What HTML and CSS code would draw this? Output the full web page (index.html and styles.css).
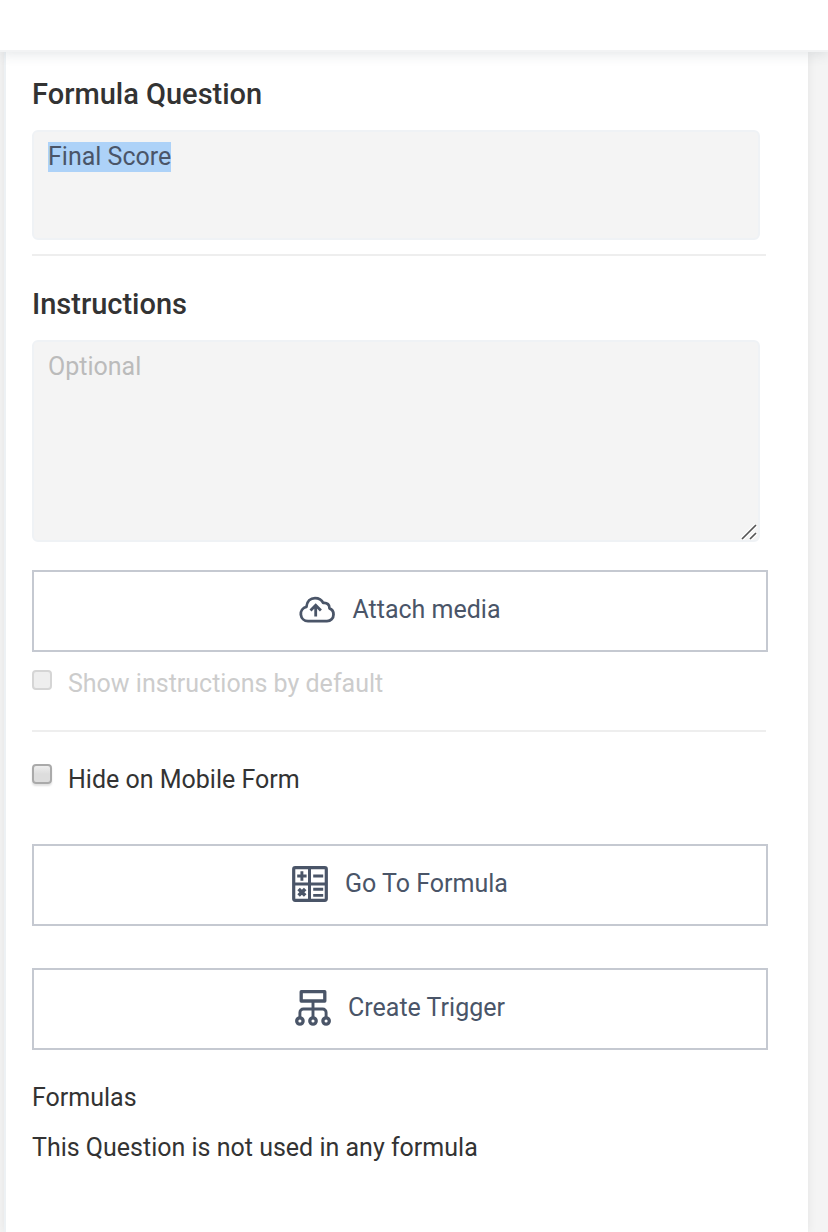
FILE: index.html
```html
<!DOCTYPE html>
<html lang="en">
<head>
<meta charset="utf-8">
<meta name="viewport" content="width=device-width, initial-scale=1">
<title>Formula Question</title>
<link rel="stylesheet" href="styles.css">
</head>
<body>
<header class="topbar"></header>
<main class="panel">
  <section class="section">
    <label class="heading" for="question">Formula Question</label>
    <textarea class="field field-question" id="question" spellcheck="false">Final Score</textarea>
  </section>
  <hr class="divider">
  <section class="section">
    <label class="heading" for="instructions">Instructions</label>
    <div class="resizable">
      <textarea class="field field-instructions" id="instructions" placeholder="Optional"></textarea>
      <svg class="grip" viewBox="0 0 16 16" aria-hidden="true"><path d="M1 15 15 1M9 15l6-6" fill="none" stroke="#fff" stroke-width="4"/><path d="M1 15 15 1M9 15l6-6" fill="none" stroke="#555" stroke-width="1.7"/></svg>
    </div>
    <button class="button button-attach" type="button">
      <svg class="icon" viewBox="0 0 36 36" fill="none" stroke="currentColor" stroke-width="2.8" stroke-linecap="round" stroke-linejoin="round" aria-hidden="true"><path d="M9 29.200a7.300 7.300 0 0 1-1.600-14.400C8 9.200 11.600 6.100 16 6.100c4 0 6.800 1.900 8.200 4.800 4-.5 6.500 2 6.300 5.500 2.500 1 4 3.200 4 6 0 4-2.900 6.800-6.500 6.800Z"/><path d="M16.700 24.500V13.200M11.500 18.500l5.200-5.200 5.200 5.200" stroke-linecap="butt" stroke-linejoin="miter"/></svg>
      <span>Attach media</span>
    </button>
    <label class="check check-disabled"><input class="box" type="checkbox" disabled><span>Show instructions by default</span></label>
  </section>
  <hr class="divider">
  <section class="section">
    <label class="check check-hide"><input class="box" type="checkbox"><span>Hide on Mobile Form</span></label>
    <div class="actions">
      <button class="button" type="button">
        <svg class="icon" viewBox="0 0 36 36" fill="none" stroke="currentColor" stroke-width="3.2" aria-hidden="true"><rect x="1.700" y="1.700" width="32.600" height="32.600" rx="1.500"/><path d="M17.500 2v32M2 18h32" stroke-width="3"/><path d="M5.200 10h9.400M9.900 5.300v9.400M21.200 10h10M21.200 23.200h10M21.200 29.400h10" stroke-width="2.900"/><path d="m6.600 23 6.600 6.600M13.200 23l-6.600 6.600" stroke-width="3.600"/></svg>
        <span>Go To Formula</span>
      </button>
      <button class="button" type="button">
        <svg class="icon" viewBox="0 0 36 36" fill="none" stroke="currentColor" stroke-width="3.300" stroke-linejoin="round" aria-hidden="true"><rect x="6.200" y="1.700" width="23.600" height="9.300"/><path d="M18 11v16M4.900 27.500v-5a3.500 3.500 0 0 1 3.500-3.500h19.200a3.500 3.500 0 0 1 3.500 3.500v5" stroke-width="2.900"/><circle cx="4.900" cy="31" r="3.200"/><circle cx="18" cy="31" r="3.200"/><circle cx="31.100" cy="31" r="3.200"/></svg>
        <span>Create Trigger</span>
      </button>
    </div>
    <h2 class="usage-title">Formulas</h2>
    <p class="usage-text">This Question is not used in any formula</p>
  </section>
</main>
<script src="script.js"></script>
</body>
</html>
```
FILE: styles.css
```css
* {
  box-sizing: border-box;
}

body {
  display: flex;
  flex-direction: column;
  min-height: 100vh;
  margin: 0;
  background: #f4f4f4;
  color: #333;
  font-family: Roboto, "Liberation Sans", sans-serif;
  font-size: 25px;
  line-height: 32px;
}

.topbar {
  position: relative;
  height: 52px;
  background: #fff;
  border-bottom: 2px solid #f2f3f4;
  box-shadow: 0 2px 12px rgba(60, 75, 95, 0.14);
}

.panel {
  flex: 1;
  margin: 0 20px 0 4px;
  padding: 26px 40px 68px 26px;
  background: #fff;
  border-left: 2px solid #edf1f4;
  box-shadow: 0 0 10px rgba(0, 0, 0, 0.07);
}

.section {
  display: flex;
  flex-direction: column;
}

.heading {
  margin-bottom: 20px;
  font-size: 29px;
  font-weight: 500;
  line-height: 32px;
}

.field {
  display: block;
  width: 100%;
  padding: 10px 14px;
  border: 2px solid #eff2f5;
  border-radius: 6px;
  background: #f4f4f4;
  color: #4a5568;
  font: inherit;
  line-height: 30px;
  outline: none;
  resize: none;
  overflow: hidden;
}

.field::selection {
  background: #add2f8;
  color: #4a5568;
}

.field::placeholder {
  color: #bbb;
}

.field-question {
  width: auto;
  height: 110px;
  margin-right: 8px;
}

.resizable {
  position: relative;
  margin-right: 8px;
}

.field-instructions {
  height: 202px;
}

.grip {
  position: absolute;
  right: 3px;
  bottom: 2px;
  width: 16px;
  height: 16px;
}

.divider {
  height: 2px;
  margin: 14px 2px 32px 0;
  border: 0;
  background: #eee;
}

.button {
  display: flex;
  align-items: center;
  justify-content: center;
  gap: 17px;
  width: 100%;
  height: 82px;
  padding: 0 0 2px;
  border: 2px solid #c5c9d1;
  background: #fff;
  color: #4a5568;
  font: inherit;
}

.icon {
  width: 36px;
  height: 36px;
}

.button-attach {
  margin-top: 28px;
}

.check {
  display: flex;
  align-items: flex-start;
  gap: 16px;
}

.check-disabled {
  margin: 16px 0;
  color: #ccc;
}

.box {
  appearance: none;
  width: 20px;
  height: 20px;
  margin: 2px 0 0;
  border: 2px solid #aaa;
  border-radius: 4px;
  background: linear-gradient(#eee, #ddd 50%);
  box-shadow: 0 2px 2px rgba(0, 0, 0, 0.12);
}

.box:disabled {
  border-color: #d5d5d5;
  background: #eee;
  box-shadow: none;
}

.check-hide .box {
  margin-top: 0;
}

.actions {
  display: flex;
  flex-direction: column;
  gap: 42px;
  margin: 48px 0 32px;
}

.usage-title,
.usage-text {
  margin: 0;
  font-size: 25px;
  font-weight: 400;
}

.usage-text {
  margin-top: 18px;
}
```
FILE: script.js
```js
const question = document.getElementById("question");
question.focus();
question.select();
```
